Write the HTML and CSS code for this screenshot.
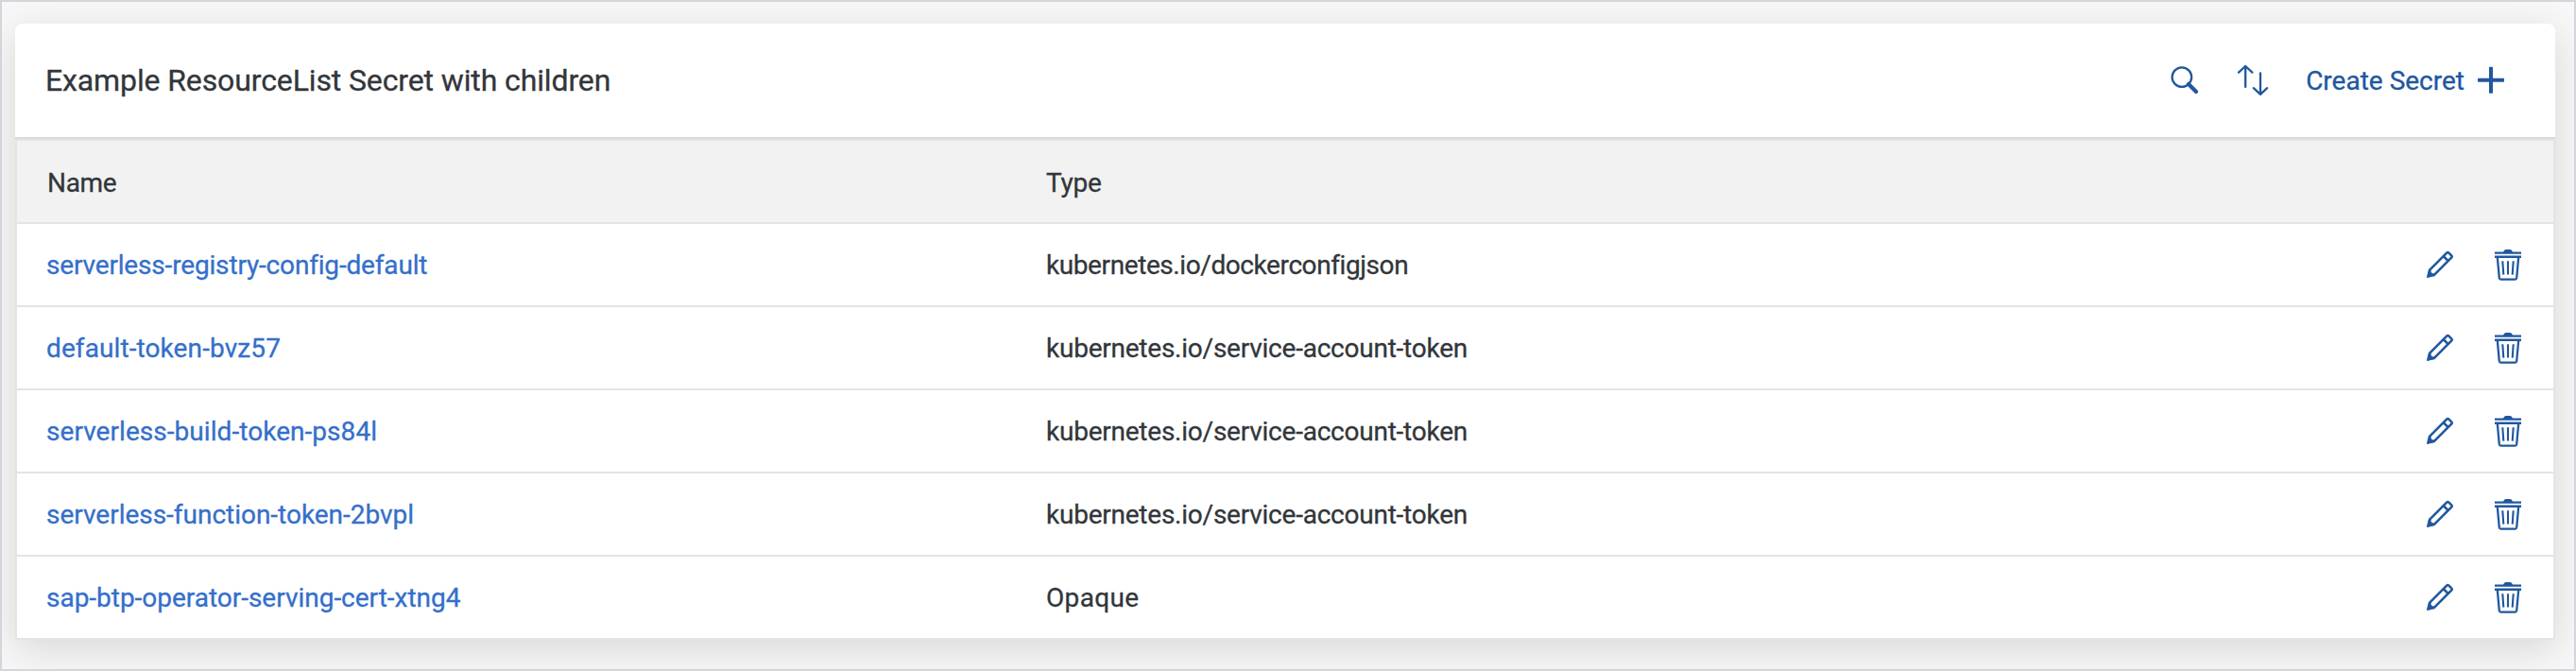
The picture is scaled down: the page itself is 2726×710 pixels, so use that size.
FILE: index.html
```html
<!DOCTYPE html>
<html lang="en">
<head>
<meta charset="utf-8">
<title>Secrets</title>
<link rel="stylesheet" href="styles.css">
</head>
<body>
<svg class="sprite" aria-hidden="true">
  <symbol id="edit" viewBox="0 0 32 36">
    <g fill="none" stroke="currentColor" stroke-width="2.6" stroke-linejoin="round">
      <path d="M3.6 30.2 5.2 23.6 23.4 5.4q.9-.8 1.8 0l3.2 3.2q.8.9 0 1.8L10.2 28.6Z"/>
      <path d="m19.6 9 5.2 5.2"/>
    </g>
    <path fill="currentColor" d="M2 32.1 4.3 23l2.2 1.2q-.2 3.3 3.6 3.6l1 2.1Z"/>
  </symbol>
  <symbol id="delete" viewBox="0 0 32 36">
    <path fill="currentColor" d="M2 4.5h9q1.2-2.4 3-2.4h4q1.8 0 3 2.4h9v2.2H2ZM2 8.6h28v2.4H2Z"/>
    <g fill="none" stroke="currentColor" stroke-width="2.1">
      <path d="m4.8 10 2 22.2q.2 1.4 1.6 1.4h15.2q1.4 0 1.6-1.4l2-22.2" stroke-width="2.3"/>
      <path d="m10.3 14.3 1 14.3M16 14.3v14.3M21.7 14.3l-1 14.3"/>
    </g>
  </symbol>
</svg>
<main class="page">
  <section class="card">
    <header class="toolbar">
      <h1 class="title">Example ResourceList Secret with children</h1>
      <div class="actions">
        <button class="button" aria-label="Search">
          <svg class="icon" viewBox="0 0 32 36" fill="none" stroke="currentColor">
            <circle cx="12.9" cy="14.6" r="10.3" stroke-width="2.3"/>
            <path d="m20 22 8 8" stroke-width="4.2" stroke-linecap="round"/>
          </svg>
        </button>
        <button class="button" aria-label="Sort">
          <svg class="icon icon-sort" viewBox="0 0 36 36" fill="none" stroke="currentColor" stroke-width="2.3" stroke-linecap="round" stroke-linejoin="round">
            <path d="M10.2 25V3M3 9.6 10.2 3l7.2 6.6M26 10.4v22.4M18.8 26.2l7.2 6.6 7.2-6.6"/>
          </svg>
        </button>
        <button class="button button-create">
          <span>Create Secret</span>
          <svg class="icon" viewBox="0 0 32 36" fill="currentColor">
            <rect x="2" y="15.7" width="28" height="4" rx=".8"/>
            <rect x="14" y="3.7" width="4" height="28" rx=".8"/>
          </svg>
        </button>
      </div>
    </header>
    <div class="table">
      <div class="row row-head"><span class="name-head">Name</span><span class="type-head">Type</span></div>
      <div class="row">
        <a class="link link-registry">serverless-registry-config-default</a><span class="docker">kubernetes.io/dockerconfigjson</span>
        <div class="row-actions"><svg class="icon"><use href="#edit"/></svg><svg class="icon"><use href="#delete"/></svg></div>
      </div>
      <div class="row">
        <a class="link link-token">default-token-bvz57</a><span class="account">kubernetes.io/service-account-token</span>
        <div class="row-actions"><svg class="icon"><use href="#edit"/></svg><svg class="icon"><use href="#delete"/></svg></div>
      </div>
      <div class="row">
        <a class="link link-build">serverless-build-token-ps84l</a><span class="account">kubernetes.io/service-account-token</span>
        <div class="row-actions"><svg class="icon"><use href="#edit"/></svg><svg class="icon"><use href="#delete"/></svg></div>
      </div>
      <div class="row">
        <a class="link link-long">serverless-function-token-2bvpl</a><span class="account">kubernetes.io/service-account-token</span>
        <div class="row-actions"><svg class="icon"><use href="#edit"/></svg><svg class="icon"><use href="#delete"/></svg></div>
      </div>
      <div class="row">
        <a class="link link-long">sap-btp-operator-serving-cert-xtng4</a><span class="opaque">Opaque</span>
        <div class="row-actions"><svg class="icon"><use href="#edit"/></svg><svg class="icon"><use href="#delete"/></svg></div>
      </div>
    </div>
  </section>
</main>
</body>
</html>
```
FILE: styles.css
```css
* { box-sizing: border-box; }
body {
  margin: 0;
  font: 28px Roboto, "Liberation Sans", sans-serif;
  color: #32363a;
  -webkit-text-stroke: .3px currentColor;
}
.sprite { display: none; }
.page {
  height: 710px;
  padding: 23px 20px 0 14px;
  border: 2px solid #d4d4dc;
  background: #f7f7f7;
  overflow: hidden;
}
.card {
  border-radius: 8px 8px 0 0;
  background: #fff;
  box-shadow: 0 10px 40px rgba(0, 0, 0, .13);
}
.toolbar {
  display: flex;
  align-items: center;
  justify-content: space-between;
  height: 122px;
  padding: 0 52px 0 32px;
  border-bottom: 2px solid #d9d9d9;
}
.title { margin: 0; font-size: 32px; font-weight: 400; letter-spacing: -.12px; }
.actions { display: flex; align-items: center; color: #21579e; }
.button {
  display: flex;
  align-items: center;
  padding: 0;
  border: 0;
  background: none;
  color: inherit;
  font: inherit;
}
.icon { display: block; width: 32px; height: 36px; }
.icon-sort { width: 36px; margin: 0 38px; }
.button-create { gap: 12px; }
.table { border: 2px solid #e4e4e4; }
.row {
  display: grid;
  grid-template-columns: 1057px 1fr auto;
  align-items: center;
  height: 88px;
  padding: 0 32px;
  border-bottom: 2px solid #e4e4e4;
}
.row:last-child { height: 86px; border-bottom: 0; }
.row-head { padding-top: 2px; background: #f2f2f2; }
.row-actions { display: flex; gap: 40px; color: #21579e; }
.link { margin-left: -1px; color: #346fca; }
.name-head { letter-spacing: -.3px; }
.type-head { letter-spacing: -.2px; }
.link-registry { letter-spacing: -.17px; }
.link-token { letter-spacing: .1px; }
.link-build { letter-spacing: .05px; }
.link-long { letter-spacing: -.02px; }
.docker { letter-spacing: -.41px; }
.account { letter-spacing: -.235px; }
.opaque { letter-spacing: .35px; }
```
